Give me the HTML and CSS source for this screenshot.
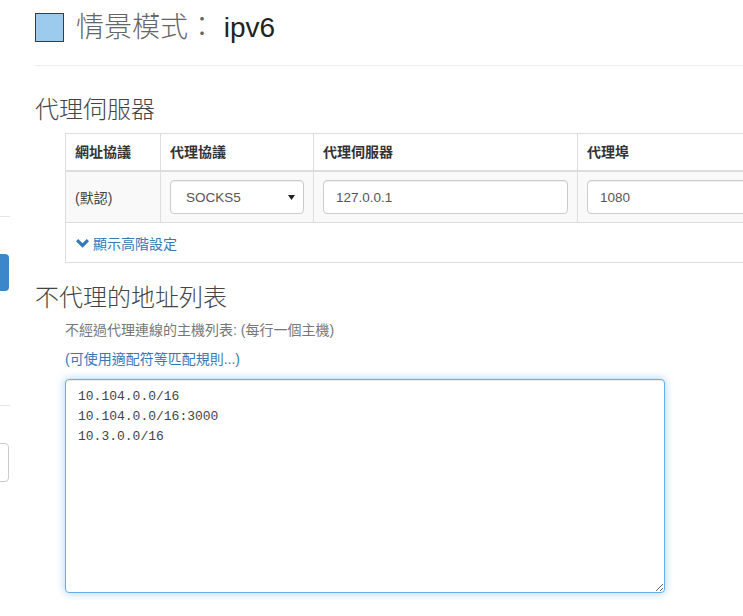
FILE: index.html
```html
<!DOCTYPE html>
<html lang="zh-Hant">
<head>
<meta charset="utf-8">
<title>情景模式： ipv6</title>
<link rel="stylesheet" href="styles.css">
</head>
<body>
<div class="page">
  <aside class="sidebar">
    <div class="side-line side-line-1"></div>
    <div class="side-btn"></div>
    <div class="side-line side-line-2"></div>
    <div class="side-box"></div>
  </aside>
  <main class="main">
    <header class="page-header">
      <span class="profile-icon"></span>
      <h1 class="title"><span class="title-label">情景模式：</span> <span class="title-name">ipv6</span></h1>
    </header>

    <section class="section">
      <h2 class="section-title">代理伺服器</h2>
      <table class="proxy-table">
        <colgroup>
          <col class="c1"><col class="c2"><col class="c3"><col class="c4">
        </colgroup>
        <thead>
          <tr>
            <th>網址協議</th>
            <th>代理協議</th>
            <th>代理伺服器</th>
            <th>代理埠</th>
          </tr>
        </thead>
        <tbody>
          <tr class="striped">
            <td class="scheme">(默認)</td>
            <td>
              <div class="select">
                <span>SOCKS5</span>
                <svg class="caret" width="7" height="5" viewBox="0 0 7 5"><path d="M0 0h7L3.5 5z" fill="#222"/></svg>
              </div>
            </td>
            <td><div class="input">127.0.0.1</div></td>
            <td><div class="input">1080</div></td>
          </tr>
          <tr>
            <td colspan="4" class="advanced">
              <a class="link" href="#">
                <svg class="chevron" width="13" height="9" viewBox="0 0 13 9"><path d="M0 2.2 2.2 0 6.5 4.3 10.8 0 13 2.2 6.5 8.7z" fill="#337ab7"/></svg>
                顯示高階設定
              </a>
            </td>
          </tr>
        </tbody>
      </table>
    </section>

    <section class="section section-bypass">
      <h2 class="section-title">不代理的地址列表</h2>
      <div class="bypass-body">
        <p class="help">不經過代理連線的主機列表: (每行一個主機)</p>
        <p class="help-link"><a class="link" href="#">(可使用適配符等匹配規則...)</a></p>
        <textarea class="bypass-list" spellcheck="false">10.104.0.0/16
10.104.0.0/16:3000
10.3.0.0/16</textarea>
      </div>
    </section>
  </main>
</div>
</body>
</html>
```

FILE: styles.css
```css
html, body {
  margin: 0;
  padding: 0;
  overflow: hidden;
  background: #fff;
}

body {
  font-family: "Liberation Sans", "Noto Sans CJK TC", sans-serif;
  color: #333;
  font-size: 14px;
}

.page {
  display: flex;
  width: 743px;
  height: 616px;
}

.sidebar {
  flex: none;
  width: 10px;
  overflow: hidden;
}

.side-line {
  height: 1px;
  width: 12px;
  background: #e6e6e6;
}

.side-line-1 {
  margin-top: 216px;
}

.side-btn {
  margin-top: 37px;
  margin-left: -40px;
  width: 49px;
  height: 37px;
  background: #3b87c9;
  border-radius: 4px;
}

.side-line-2 {
  margin-top: 114px;
}

.side-box {
  margin-top: 37px;
  margin-left: -40px;
  width: 47px;
  height: 37px;
  border: 1px solid #ccc;
  border-radius: 4px;
}

.main {
  flex: 1;
  min-width: 0;
  padding-left: 25px;
}

.page-header {
  display: flex;
  align-items: center;
  gap: 12px;
  padding-top: 13px;
  padding-bottom: 23px;
  border-bottom: 1px solid #eee;
  width: 760px;
}

.profile-icon {
  flex: none;
  width: 27px;
  height: 27px;
  background: #9dcbee;
  border: 1px solid #3a3a3a;
}

.title {
  margin: 0;
  font-size: 28px;
  font-weight: normal;
  line-height: 29px;
  white-space: nowrap;
}

.title-label {
  color: #666;
  font-weight: 300;
}

.title-name {
  color: #222;
}

.section-title {
  margin: 0;
  font-size: 24px;
  font-weight: 300;
  line-height: 30px;
  color: #444;
}

.section {
  padding-top: 29px;
}

.proxy-table {
  margin-top: 8px;
  margin-left: 30px;
  border-collapse: collapse;
  border: 1px solid #ddd;
  width: 760px;
  table-layout: fixed;
}

.c1 { width: 95px; }
.c2 { width: 153px; }
.c3 { width: 264px; }

.proxy-table th {
  text-align: left;
  font-weight: bold;
  font-size: 14px;
  line-height: 20px;
  padding: 8px 9px;
  border-left: 1px solid #ddd;
  border-bottom: 2px solid #ddd;
  color: #333;
}

.proxy-table td {
  padding: 8px 9px;
  border-left: 1px solid #ddd;
  border-top: 1px solid #ddd;
  font-size: 14px;
  vertical-align: middle;
}

.striped td {
  background: #f9f9f9;
}

.scheme {
  color: #444;
}

.select,
.input {
  display: flex;
  align-items: center;
  box-sizing: border-box;
  height: 34px;
  padding: 0 12px;
  background: #fff;
  border: 1px solid #ccc;
  border-radius: 4px;
  box-shadow: inset 0 1px 1px rgba(0, 0, 0, 0.075);
  font-size: 13.5px;
  color: #555;
}

.select {
  justify-content: space-between;
  padding-left: 15px;
  padding-right: 8px;
}

.proxy-table td.advanced {
  padding: 10px 10px 8px;
  line-height: 20px;
  background: #fff;
}

.link {
  color: #337ab7;
  text-decoration: none;
  font-size: 14px;
}

.advanced .link {
  display: inline-flex;
  align-items: center;
  gap: 4px;
}

.section-bypass {
  padding-top: 20px;
}

.bypass-body {
  margin-left: 30px;
}

.help {
  margin: 7px 0 0;
  font-size: 14px;
  line-height: 20px;
  color: #777;
}

.help-link {
  margin: 9px 0 0;
  font-size: 14px;
  line-height: 20px;
}

.bypass-list {
  display: block;
  box-sizing: border-box;
  margin-top: 10px;
  width: 600px;
  height: 214px;
  padding: 7px 12px;
  font-family: "Liberation Mono", monospace;
  font-size: 13px;
  line-height: 20px;
  color: #444;
  border: 1px solid #66afe9;
  border-radius: 4px;
  outline: none;
  box-shadow: inset 0 1px 1px rgba(0, 0, 0, 0.075), 0 0 8px rgba(102, 175, 233, 0.6);
  resize: vertical;
}
```
